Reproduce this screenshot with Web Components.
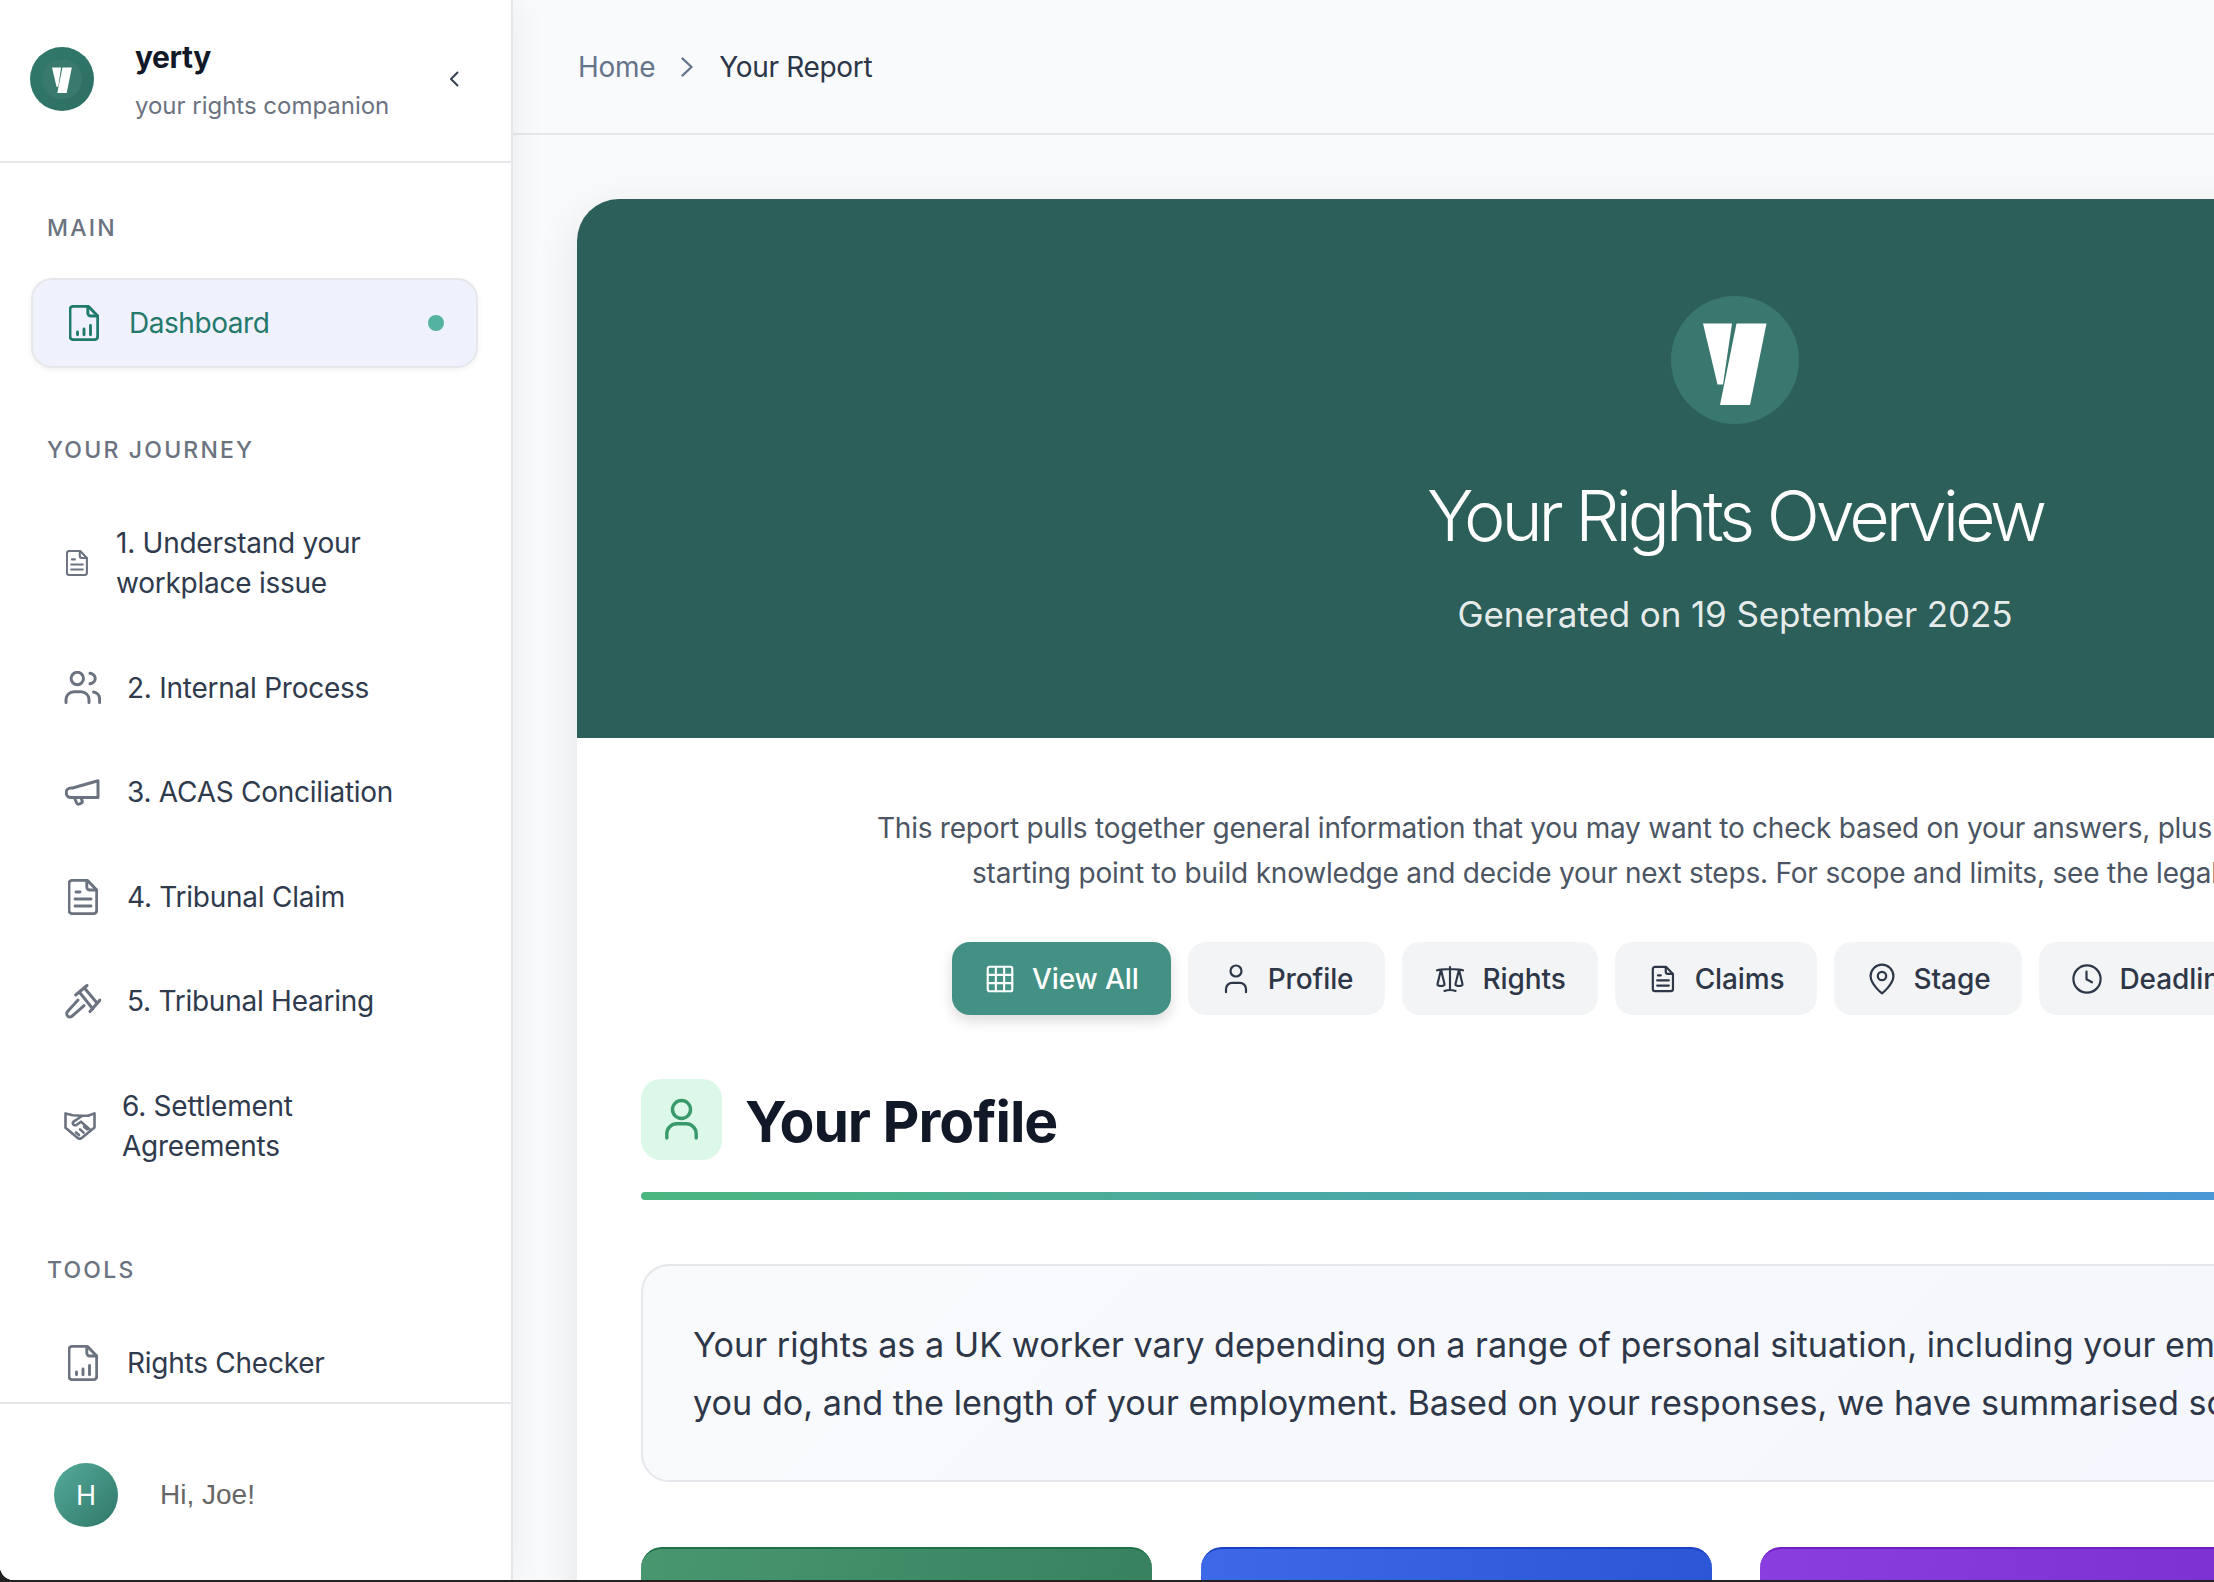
<!DOCTYPE html>
<html lang="en"><head><meta charset="utf-8"><title>Your Report</title>
<style>
html,body{margin:0;height:1582px;overflow:hidden;background:#222;}
body{font-family:Inter,"Liberation Sans",sans-serif;}
</style></head>
<body>
<template id="t-app"><style>
:host{display:flex;height:1580px;overflow:hidden;border-bottom-left-radius:14px;background:#f9fafb}
</style><slot name="side"></slot><slot name="main"></slot></template>

<template id="t-side"><style>
:host{display:flex;flex-direction:column;width:511px;flex:none;background:#fff;border-right:2px solid #e5e7eb;box-shadow:4px 0 30px rgba(0,0,0,.05);position:relative;z-index:2}
.nav{flex:1;min-height:0;overflow:hidden;padding:51px 0 0}
</style><slot name="head"></slot><div class="nav"><slot></slot></div><slot name="foot"></slot></template>

<template id="t-brand"><style>
:host{display:flex;align-items:center;height:161px;border-bottom:2px solid #e5e7eb;padding-left:30px;box-sizing:content-box}
.badge{width:64px;height:64px;border-radius:50%;background:linear-gradient(135deg,#31796c,#2d6f63);display:flex;align-items:center;justify-content:center;flex:none;margin-top:-3px}
.txt{margin-left:41px;flex:1;margin-top:-3px}
.n{font:700 30px/40px Inter,sans-serif;color:#111827;letter-spacing:-.4px}
.s{font:400 24px/32px Inter,sans-serif;color:#6b7280;margin-top:13px;letter-spacing:-.02px}
ui-icon{margin:-4px 52px 0 0;color:#374151}
</style><div class="badge"><logo-mark size="40"></logo-mark></div><div class="txt"><div class="n"><slot name="name"></slot></div><div class="s"><slot name="sub"></slot></div></div><ui-icon name="chev-l" w="10" h="16"></ui-icon></template>

<template id="t-label"><style>
:host{display:block;font:550 23px/28px Inter,sans-serif;letter-spacing:2.2px;color:#6b7280;padding-left:47px;margin-top:var(--mt,0);margin-bottom:var(--mb,0)}
</style><slot></slot></template>

<template id="t-item"><style>
:host{display:flex;align-items:center;padding:32.25px 0 32.25px var(--il);font:400 28px/40px Inter,sans-serif;letter-spacing:-.25px;color:#2f3a4d}
ui-icon{color:#6b7280;flex:none}
.t{margin-left:var(--tg)}
</style><ui-icon id="i"></ui-icon><div class="t"><slot></slot></div></template>

<template id="t-active"><style>
:host{display:flex;align-items:center;height:90px;box-sizing:border-box;margin:0 33px 0 31px;background:#eff2fd;border:2px solid #e5e7eb;border-radius:21px;box-shadow:0 2px 6px rgba(0,0,0,.06);font:400 28px/40px Inter,sans-serif;letter-spacing:-.45px;color:#24796b;padding-left:36px}
ui-icon{color:#1f7a6c;flex:none}
.t{margin-left:30px;flex:1}
.d{width:16px;height:16px;border-radius:50%;background:#54b3a0;margin-right:32px}
</style><ui-icon name="chart" w="30" h="36"></ui-icon><div class="t"><slot></slot></div><div class="d"></div></template>

<template id="t-foot"><style>
:host{display:flex;align-items:center;height:178px;box-sizing:border-box;flex:none;border-top:2px solid #e5e7eb;padding:6px 0 0 54px;background:#fff;position:relative}
.a{width:64px;height:64px;border-radius:50%;background:linear-gradient(135deg,#55ac9b,#2f7668);display:flex;align-items:center;justify-content:center;color:#fff;font:400 27px/1 Inter,sans-serif}
.h{margin-left:42px;font:400 28px/40px "Liberation Sans",Arial,sans-serif;color:#666}
</style><div class="a">H</div><div class="h"><slot></slot></div></template>

<template id="t-main"><style>
:host{display:block;flex:1;min-width:0;overflow:hidden;background:#f9fafb}
.c{padding:64px 0 0 64px}
</style><slot name="top"></slot><div class="c"><slot></slot></div></template>

<template id="t-top"><style>
:host{display:flex;align-items:center;height:133px;border-bottom:2px solid #e5e7eb;padding-left:65px;font:400 28px/40px Inter,sans-serif;letter-spacing:-.32px;color:#2b3648}
.h{color:#64748b}
ui-icon{margin:0 26px 0 26px;color:#64748b}
</style><span class="h"><slot name="home"></slot></span><ui-icon name="chev-r" w="12" h="20"></ui-icon><span><slot></slot></span></template>

<template id="t-card"><style>
:host{display:block;width:2316px;background:#fff;border-radius:42px 42px 0 0;box-shadow:0 12px 46px rgba(0,0,0,.09)}
.b{padding:68px 64px 0}
</style><slot name="hero"></slot><div class="b"><slot></slot></div></template>

<template id="t-hero"><style>
:host{display:flex;flex-direction:column;align-items:center;height:539px;box-sizing:border-box;padding-top:97px;background:#2d5f5a;border-radius:42px 42px 0 0;color:#fff;text-align:center}
.c{width:128px;height:128px;border-radius:50%;background:#3a776e;flex:none}
h1{margin:50px 0 0;font:300 70px/84px Inter,sans-serif;letter-spacing:-4.1px}
p{margin:32px 0 0;font:400 35px/48px Inter,sans-serif;letter-spacing:-.1px;color:rgba(255,255,255,.9)}
</style><div class="c"><logo-mark size="128"></logo-mark></div><h1><slot name="title"></slot></h1><p><slot name="sub"></slot></p></template>

<template id="t-intro"><style>
:host{display:block;font:400 28px/45px Inter,sans-serif;letter-spacing:-.24px;color:#4b5563;white-space:nowrap}
::slotted(span){display:block}
</style><slot></slot></template>

<template id="t-tabs"><style>
:host{display:flex;gap:17px;margin:46px 0 0 311px;width:max-content}
</style><slot></slot></template>

<template id="t-pill"><style>
:host{display:flex;align-items:center;gap:16px;height:73px;box-sizing:border-box;padding:0 32px;border-radius:18px;background:#f3f4f6;color:#2d3748;font:500 28px/40px Inter,sans-serif;letter-spacing:-.1px;white-space:nowrap;flex:none}
:host([active]){background:#429184;color:#fff;box-shadow:0 6px 14px rgba(0,0,0,.14)}
</style><ui-icon id="i" w="32" h="32"></ui-icon><slot></slot></template>

<template id="t-sec"><style>
:host{display:block;margin-top:64px}
.r{display:flex;align-items:center;gap:23px}
.i{width:81px;height:81px;border-radius:20px;background:#dcf8e8;color:#38996a;flex:none}
h2{margin:0;padding-top:4px;font:700 57px/77px Inter,sans-serif;letter-spacing:-1px;color:#111827}
.bar{height:8px;border-radius:4px;margin-top:32px;width:2188px;background:linear-gradient(90deg,#4ab67f,#4a96d9 75%)}
</style><div class="r"><div class="i"><ui-icon name="person-lg" w="81" h="81"></ui-icon></div><h2><slot></slot></h2></div><div class="bar"></div></template>

<template id="t-info"><style>
:host{display:block;width:2188px;box-sizing:border-box;margin-top:64px;padding:50px 50px 48px;border:2px solid #e5e7eb;border-radius:28px;background:linear-gradient(135deg,#f8fafc,#f3f6fd);font:400 34.2px/58px Inter,sans-serif;color:#2d3748;white-space:nowrap}
</style><slot></slot></template>

<template id="t-grid"><style>
:host{display:grid;grid-template-columns:repeat(3,511px);gap:48.5px;margin-top:65px;width:max-content}
.x{height:200px;border-radius:21px 21px 0 0;background:var(--g);border-top:2px solid var(--e);box-sizing:border-box}
</style><div class="x" style="--g:linear-gradient(100deg,#48976f,#38805f);--e:#1d7048"></div><div class="x" style="--g:linear-gradient(100deg,#3b69e8,#2a55d4);--e:#1a3fc4"></div><div class="x" style="--g:linear-gradient(100deg,#8a3ee0,#7c2fd0);--e:#6f1fc0"></div></template>

<app-shell>
  <side-bar slot="side">
    <brand-head slot="head"><span slot="name">yerty</span><span slot="sub">your rights companion</span></brand-head>
    <nav-label style="--mb:36px">MAIN</nav-label>
    <nav-active>Dashboard</nav-active>
    <nav-label style="--mt:68px;--mb:27px">YOUR JOURNEY</nav-label>
    <nav-item icon="doc" w="22" h="26" style="--il:66px;--tg:28px">1. Understand your<br>workplace issue</nav-item>
    <nav-item icon="users" w="37" h="33" style="--il:64px;--tg:26px">2. Internal Process</nav-item>
    <nav-item icon="mega" w="35" h="27" style="--il:65px;--tg:27px">3. ACAS Conciliation</nav-item>
    <nav-item icon="doc" w="30" h="36" style="--il:68px;--tg:29px">4. Tribunal Claim</nav-item>
    <nav-item icon="gavel" w="36" h="35" style="--il:65px;--tg:26px">5. Tribunal Hearing</nav-item>
    <nav-item icon="shake" w="32" h="29" style="--il:64px;--tg:26px">6. Settlement<br>Agreements</nav-item>
    <nav-label style="--mt:58px;--mb:27px">TOOLS</nav-label>
    <nav-item icon="chart" w="30" h="36" style="--il:68px;--tg:29px">Rights Checker</nav-item>
    <user-foot slot="foot">Hi, Joe!</user-foot>
  </side-bar>
  <main-area slot="main">
    <top-bar slot="top"><span slot="home">Home</span>Your Report</top-bar>
    <report-card>
      <hero-banner slot="hero"><span slot="title">Your Rights Overview</span><span slot="sub">Generated on 19 September 2025</span></hero-banner>
      <intro-text><span style="margin-left:236px">This report pulls together general information that you may want to check based on your answers, plus</span><span style="margin-left:331px;letter-spacing:-.2px">starting point to build knowledge and decide your next steps. For scope and limits, see the legal</span></intro-text>
      <tab-row>
        <tab-pill icon="grid" active>View All</tab-pill>
        <tab-pill icon="person">Profile</tab-pill>
        <tab-pill icon="scale">Rights</tab-pill>
        <tab-pill icon="doc-sm">Claims</tab-pill>
        <tab-pill icon="pin">Stage</tab-pill>
        <tab-pill icon="clock">Deadlines</tab-pill>
      </tab-row>
      <section-head>Your Profile</section-head>
      <info-box>Your rights as a UK worker vary depending on a range of personal situation, including your employment<br>you do, and the length of your employment. Based on your responses, we have summarised some</info-box>
      <card-grid></card-grid>
    </report-card>
  </main-area>
</app-shell>

<script>
const DOC='M4 1.4h14.5c.6 0 1.2.3 1.6.7l7.9 8.2c.4.4.7 1 .7 1.6v19.7a3 3 0 0 1-3 3H4a3 3 0 0 1-3-3V4.4a3 3 0 0 1 3-3z';
const FOLD='M18.8 1.6v6.4a3 3 0 0 0 3 3h6.8';
const ICONS={
 chart:{vb:'0 0 30 36',sw:2.9,d:[DOC,FOLD,'M8.5 27v2.8','M15 24v5.8','M21.5 20.5v9.3']},
 doc:{vb:'0 0 30 36',sw:2.9,d:[DOC,FOLD,'M8 13h4','M7 20h16','M7 27h16']},
 'doc-sm':{vb:'-3 -4 36 44',sw:3,d:[DOC,FOLD,'M8 13h4','M7 20h16','M7 27h16']},
 users:{vb:'0 0 37 33',sw:3,d:['M19.5 7.5a6.2 6.2 0 1 1-12.4 0 6.2 6.2 0 0 1 12.4 0z','M26 2.2c3 .5 5.2 2.7 5.2 5.3s-2.2 4.8-5.2 5.3','M2 31.5v-3c0-4.3 3.6-7.8 8-7.8h7c4.4 0 8 3.5 8 7.8v3','M29.6 21c3.6.6 6 3.7 6 7.3v3.2']},
 mega:{vb:'0 0 35 27',sw:3,d:['M33 1.8 7.6 9H6a4.8 4.8 0 0 0 0 9.6h27z','M9.5 19l2.2 5c.5 1.1 1.7 1.5 2.8 1l1.6-.8c1-.5 1.4-1.6 1-2.6l-1-2.4']},
 gavel:{vb:'0 0 36 35',sw:3,d:['M10.7 11 22 1.5','M25 27.5 35 16','M14.5 8.2 27.7 24.8','M19.4 4 32 19','M13 16 2.6 27.4a3.2 3.2 0 0 0 4.8 4.5L19 21.6']},
 shake:{vb:'0 0 32 29',sw:2.6,d:['M1.5 2.4v14.4l11.6 9.8c1.6 1.4 3.6 1.4 5.2 0l12.2-10V2.4l-6.5 2.4h-6.7l-8.6-.6z','M18 5 9.6 10.6c-1.2.9-1 2.8.3 3.4 1 .5 2 .3 2.8-.3l4.3-3 8.8 7.8','M12 21.5l3 2.6','M16 18.4l3.6 3.2','M20 15.6l3 2.8']},
 'chev-l':{vb:'0 0 10 16',sw:2,d:['M8.5 1.5 2 8l6.5 6.5']},
 'chev-r':{vb:'0 0 12 20',sw:2.4,d:['M1.5 1.5 10.5 10l-9 8.5']},
 grid:{vb:'0 0 24 24',sw:1.6,d:['M4.2 2.8h15.6c.8 0 1.4.6 1.4 1.4v15.6c0 .8-.6 1.4-1.4 1.4H4.2c-.8 0-1.4-.6-1.4-1.4V4.2c0-.8.6-1.4 1.4-1.4z','M8.9 2.8v18.4','M15.1 2.8v18.4','M2.8 8.9h18.4','M2.8 15.1h18.4']},
 person:{vb:'0 0 32 32',sw:2.2,d:['M21.5 8a5.5 5.5 0 1 1-11 0 5.5 5.5 0 0 1 11 0z','M6 29.2V26a6.2 6.2 0 0 1 6.2-6.2h7.6A6.2 6.2 0 0 1 26 26v3.2']},
 'person-lg':{vb:'0 0 81 81',sw:3.4,d:['M49.5 30.5a9 9 0 1 1-18 0 9 9 0 0 1 18 0z','M25.8 59v-4.2c0-5.5 4.5-10 10-10h9.4c5.5 0 10 4.5 10 10V59']},
 scale:{vb:'0 0 24 24',sw:1.6,d:['M12 3v17.25m0 0c-1.472 0-2.882.265-4.185.75M12 20.25c1.472 0 2.882.265 4.185.75M18.75 4.97A48.416 48.416 0 0 0 12 4.5c-2.291 0-4.545.16-6.75.47m13.5 0c1.01.143 2.01.317 3 .52m-3-.52 2.62 10.726c.122.499-.106 1.028-.589 1.202a5.988 5.988 0 0 1-2.031.352 5.988 5.988 0 0 1-2.031-.352c-.483-.174-.711-.703-.59-1.202L18.75 4.971Zm-16.5.52c.99-.203 1.99-.377 3-.52m0 0 2.62 10.726c.122.499-.106 1.028-.589 1.202a5.989 5.989 0 0 1-2.031.352 5.989 5.989 0 0 1-2.031-.352c-.483-.174-.711-.703-.59-1.202L5.25 4.971Z']},
 pin:{vb:'0 0 32 32',sw:2.2,d:['M16 30.4S4.6 21.4 4.6 13a11.4 11.4 0 0 1 22.8 0C27.4 21.4 16 30.4 16 30.4z','M20.2 13a4.2 4.2 0 1 1-8.4 0 4.2 4.2 0 0 1 8.4 0z']},
 clock:{vb:'0 0 32 32',sw:2.2,d:['M29.6 16a13.6 13.6 0 1 1-27.2 0 13.6 13.6 0 0 1 27.2 0z','M15.5 8.5v7.8l5.5 3']}
};
function def(tag,tid,init){
  customElements.define(tag,class extends HTMLElement{
    constructor(){super();this.attachShadow({mode:'open'}).append(document.getElementById(tid).content.cloneNode(true));}
    connectedCallback(){if(init)init(this);}
  });
}
customElements.define('ui-icon',class extends HTMLElement{
  static get observedAttributes(){return['name','w','h'];}
  constructor(){super();this.attachShadow({mode:'open'});}
  attributeChangedCallback(){this.draw();}
  connectedCallback(){this.draw();}
  draw(){
    const ic=ICONS[this.getAttribute('name')];if(!ic)return;
    const w=this.getAttribute('w')||24,h=this.getAttribute('h')||24;
    this.shadowRoot.innerHTML=`<style>:host{display:block;width:${w}px;height:${h}px;flex:none}svg{display:block}</style><svg xmlns="http://www.w3.org/2000/svg" width="${w}" height="${h}" viewBox="${ic.vb}" fill="none" stroke="currentColor" stroke-width="${ic.sw}" stroke-linecap="round" stroke-linejoin="round">${ic.d.map(p=>`<path d="${p}"/>`).join('')}</svg>`;
  }
});
customElements.define('logo-mark',class extends HTMLElement{
  constructor(){super();this.attachShadow({mode:'open'});}
  connectedCallback(){
    const s=+this.getAttribute('size');
    const bg=s<100?'background:#3a7a6e;border-radius:50%;':'';
    this.shadowRoot.innerHTML=`<style>:host{display:block;width:${s}px;height:${s}px;${bg}}svg{display:block}</style><svg xmlns="http://www.w3.org/2000/svg" width="${s}" height="${s}" viewBox="0 0 128 128"><path fill="#fff" d="M32 27.5h29l-9 61h-5.5zM65.5 27.5h30L79 109H49z"/></svg>`;
  }
});
def('app-shell','t-app');def('side-bar','t-side');def('brand-head','t-brand');def('nav-label','t-label');
def('nav-item','t-item',e=>{const i=e.shadowRoot.getElementById('i');i.setAttribute('w',e.getAttribute('w'));i.setAttribute('h',e.getAttribute('h'));i.setAttribute('name',e.getAttribute('icon'));});
def('nav-active','t-active');def('user-foot','t-foot');def('main-area','t-main');def('top-bar','t-top');def('report-card','t-card');def('hero-banner','t-hero');
def('intro-text','t-intro');def('tab-row','t-tabs');
def('tab-pill','t-pill',e=>{e.shadowRoot.getElementById('i').setAttribute('name',e.getAttribute('icon'));});
def('section-head','t-sec');def('info-box','t-info');def('card-grid','t-grid');
</script>
</body></html>
